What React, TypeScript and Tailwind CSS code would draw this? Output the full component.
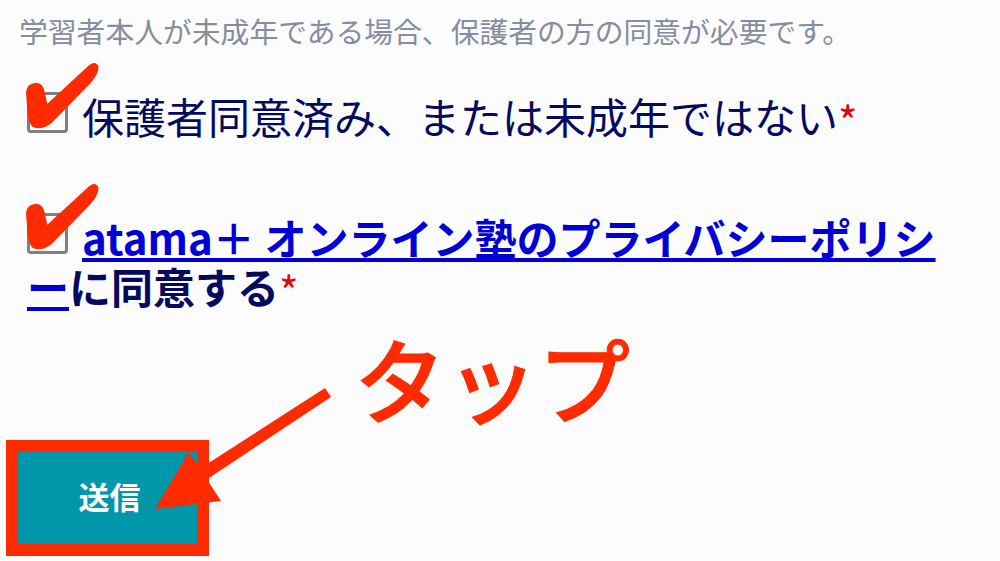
import React from 'react';

const Check: React.FC = () => (
  <svg className="absolute left-[-10px] top-[-38px]" width="84" height="77" viewBox="60 20 252 231">
    <path
      d="M78 125 Q80 100 108 97 Q130 98 134 125 L142 160 L268 44 Q288 30 296 50 Q294 75 270 100 L155 218 Q125 242 98 230 Q83 215 82 180 Z"
      fill="#ff2b00"
    />
  </svg>
);

const Box: React.FC = () => (
  <span className="relative inline-block w-[41px] h-[41px] mr-[14px] align-[1px] rounded-[4px] border-[3px] border-[#808080] bg-white">
    <Check />
  </span>
);

const Star = () => <span className="text-[#e8000d] leading-[0] align-[-4px] font-normal">*</span>;

export default function App() {
  return (
    <div className="relative flex flex-col w-[1000px] h-[561px] overflow-hidden bg-[#fcfcfd] font-['Noto_Sans_CJK_JP','Noto_Sans',sans-serif]">
      <p className="pl-[19px] pt-[11px] text-[28.8px] leading-[40px] text-[#858d9e]">
        学習者本人が未成年である場合、保護者の方の同意が必要です。
      </p>

      <div className="flex flex-col gap-[72px] pl-[27px] pt-[40px] w-[960px] text-[#050a5f] text-[42px] leading-[49px]">
        <div>
          <Box />
          保護者同意済み、または未成年ではない
          <Star />
        </div>

        <div className="font-bold [line-break:anywhere]">
          <Box />
          <a href="#" className="text-[#0000d6] underline">atama＋ オンライン塾のプライバシーポリシー</a>
          に同意する
          <Star />
        </div>
      </div>

      <div className="flex flex-1 items-end pl-[6px] pb-[5px]">
        <button className="w-[203px] h-[116px] pl-1 pb-1 border-[12px] border-[#ff2b00] bg-[#0097ab] text-white text-[31px] font-bold">
          送信
        </button>
      </div>

      <span className="absolute left-[354px] top-[317px] text-[92px] leading-[120px] font-medium [-webkit-text-stroke:1px_#ff2b00] text-[#ff2b00] whitespace-nowrap">
        タップ
      </span>

      <svg className="absolute left-0 top-0 pointer-events-none" width="1000" height="561" viewBox="0 0 1000 561">
        <polygon points="325,388 331,397 209,478 204,466" fill="#ff2b00" />
        <polygon points="155,509 189,452 221,501" fill="#ff2b00" />
      </svg>
    </div>
  );
}
